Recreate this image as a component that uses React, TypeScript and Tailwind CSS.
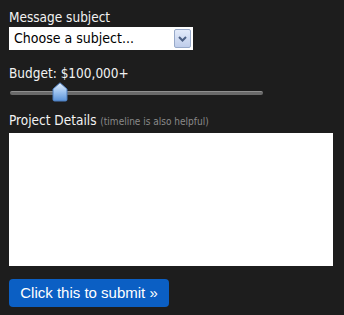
import React from 'react'

const App: React.FC = () => {
    return (
        <div className="w-[344px] h-[315px] bg-[#1d1d1d] text-[#f2f2f2] font-['DejaVu_Sans_Condensed',sans-serif] pl-[9px] pt-[8px]">
            <div className="text-[13.5px] leading-[18px]">Message subject</div>
            <div className="mt-[1px] w-[184px] h-[23px] bg-white flex items-center justify-between pl-[5px] pr-[2px]">
                <span className="text-black text-[14px]">Choose a subject...</span>
                <div className="w-[17px] h-[19px] border border-[#97a9c9] bg-gradient-to-b from-[#e3ebfa] to-[#bfcdea] flex items-center justify-center rounded-[2px]">
                    <svg width="9" height="6" viewBox="0 0 9 6">
                        <path d="M1 1 L4.5 4.5 L8 1" stroke="#4d6185" strokeWidth="2" fill="none"/>
                    </svg>
                </div>
            </div>

            <div className="mt-[14px] text-[13.5px] leading-[18px]">Budget: $100,000+</div>
            <div className="relative mt-0 w-[254px] h-[20px]">
                <div className="absolute left-[1px] right-0 top-[9px] h-[4px] rounded-full bg-[#6a6a6a] border-t border-[#8f8f8f]"/>
                <svg className="absolute left-[43px] top-0" width="16" height="20" viewBox="0 0 16 20">
                    <defs>
                        <linearGradient id="thumb" x1="0" y1="0" x2="0" y2="1">
                            <stop offset="0" stopColor="#e4effc"/>
                            <stop offset="0.5" stopColor="#9cc2ef"/>
                            <stop offset="1" stopColor="#5a91d6"/>
                        </linearGradient>
                    </defs>
                    <path d="M8 0.8 L15 7 L15 17.5 Q15 19 13.5 19 L2.5 19 Q1 19 1 17.5 L1 7 Z" fill="url(#thumb)" stroke="#4d7dbd" strokeWidth="1"/>
                </svg>
            </div>

            <div className="mt-[9px] text-[13.5px] leading-[18px]">
                Project Details <span className="text-[10px] text-[#8a8a8a]">(timeline is also helpful)</span>
            </div>
            <div className="mt-[2px] w-[324px] h-[133px] bg-white"/>

            <button className="mt-[13px] w-[160px] h-[28px] rounded-[4px] bg-[#0b5fc4] text-white text-[15px] font-['Liberation_Sans',sans-serif] flex items-center justify-center">
                Click this to submit »
            </button>
        </div>
    )
}

export default App
